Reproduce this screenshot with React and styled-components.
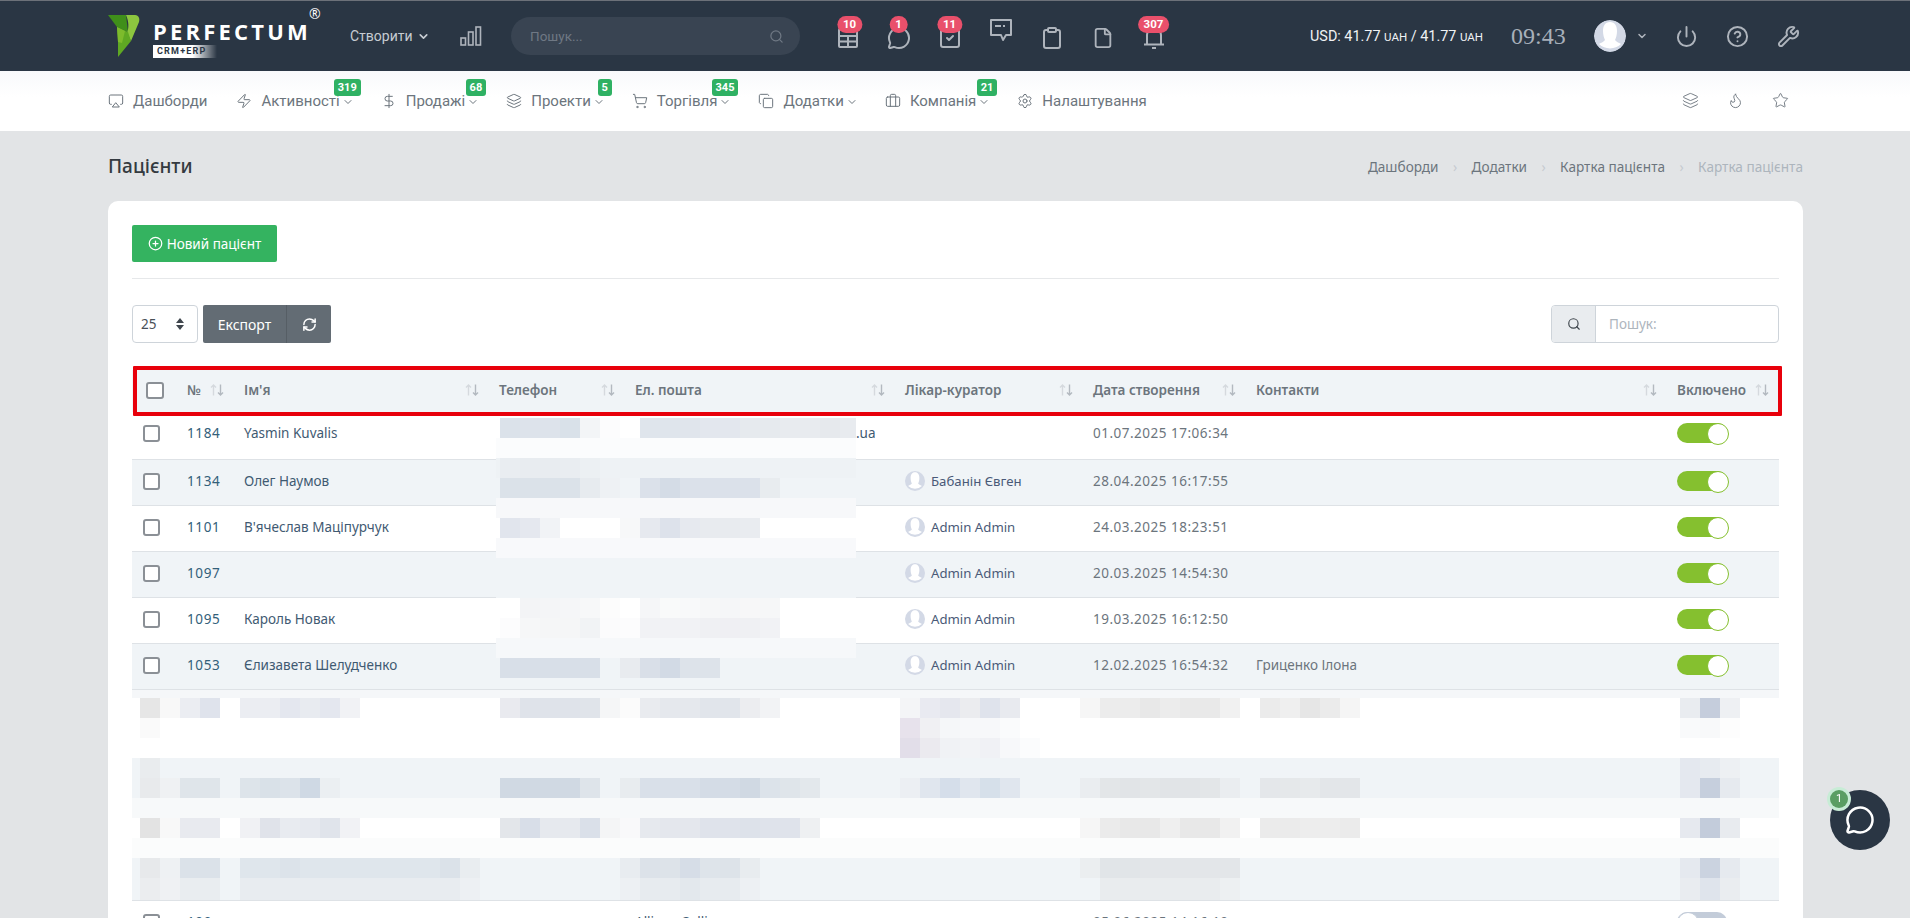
import React from 'react'
import styled, { createGlobalStyle } from 'styled-components'
import {
  Airplay, Zap, DollarSign, Layers, ShoppingCart, Copy, Briefcase, Settings, ChevronDown,
  Search, SquareCheck, Clipboard, File, Power, CircleHelp, Wrench, Flame, Star,
  CirclePlus, RefreshCw, MessageCircle,
} from 'lucide-react'

const GlobalStyle = createGlobalStyle`
  html, body {
    margin: 0;
    height: 100%;
    overflow: hidden;
    background: #e2e4e6;
    font-family: 'Roboto', 'Liberation Sans', sans-serif;
  }
  * { box-sizing: border-box; }
`

const COLS = '55px 57px 255px 136px 270px 188px 163px 421px 102px'

const navItems = [
  { icon: Airplay, label: 'Дашборди', gap: 0 },
  { icon: Zap, label: 'Активності', badge: '319', chevron: true },
  { icon: DollarSign, label: 'Продажі', badge: '68', chevron: true },
  { icon: Layers, label: 'Проекти', badge: '5', chevron: true },
  { icon: ShoppingCart, label: 'Торгівля', badge: '345', chevron: true },
  { icon: Copy, label: 'Додатки', chevron: true },
  { icon: Briefcase, label: 'Компанія', badge: '21', chevron: true },
  { icon: Settings, label: 'Налаштування' },
]

const rows = [
  { id: 1184, name: 'Yasmin Kuvalis', tail: '.ua', date: '01.07.2025 17:06:34' },
  { id: 1134, name: 'Олег Наумов', doctor: 'Бабанін Євген', date: '28.04.2025 16:17:55' },
  { id: 1101, name: "В'ячеслав Маціпурчук", doctor: 'Admin Admin', date: '24.03.2025 18:23:51' },
  { id: 1097, name: '', doctor: 'Admin Admin', date: '20.03.2025 14:54:30' },
  { id: 1095, name: 'Кароль Новак', doctor: 'Admin Admin', date: '19.03.2025 16:12:50' },
  { id: 1053, name: 'Єлизавета Шелудченко', doctor: 'Admin Admin', date: '12.02.2025 16:54:32', contact: 'Гриценко Ілона' },
]

// blurred part over the phone / email columns, 20px blocks from x=500
const emailMask = [
  { bg: '#ffffff', c: ['#dbe2ea', '#dde3eb', '#dde3eb', '#d9e1e9', '#f3f5f7', '#fcfcfd', null, '#dfe5ec', '#dfe5ec', '#e0e5ec', '#e3e7ee', '#e3e7ee', '#e6eaee', '#e6eaee', '#e8ebef', '#e8ebef', '#e6e9ed', '#e8ebef'] },
  { bg: '#fbfcfd', c: [] },
  { bg: '#eef2f5', c: ['#e9edf1', '#e8ecf0', '#e8ecf0', '#e9edf1', '#ecf0f3'] },
  { bg: '#f0f4f7', c: ['#dbe2e9', '#dbe2e9', '#dbe2e9', '#dbe2e9', '#e7ebef', '#eef1f4', null, '#dbe1ea', '#d4dce6', '#dbe1ea', '#dbe1ea', '#dbe1ea', '#dbe1ea', '#e8ecef'] },
  { bg: '#f7f8fa', c: [] },
  { bg: '#ffffff', c: ['#e1e5ed', '#e5e8ef', '#f1f3f6', null, null, null, '#f7f8f9', '#e6e9ef', '#dde2eb', '#e6e9ef', '#e8ebef', '#e8ebef', '#e9ecf0'] },
  { bg: '#f8f9fb', c: [] },
  { bg: '#f0f4f7', c: [] },
  { bg: '#f0f4f7', c: [] },
  { bg: '#ffffff', c: [null, '#f3f4f6', '#f4f5f7', '#f5f6f8', '#f7f8f9', '#fcfcfc', null, '#f5f6f8', '#f9fafa', '#f8f9fa', '#f6f7f8', '#f5f6f8', '#f7f7f8', '#f6f7f8'] },
  { bg: '#ffffff', c: ['#fcfcfd', '#f6f7f8', '#f5f6f7', '#f5f6f7', '#f1f3f5', '#fbfbfc', '#fcfcfd', '#f1f2f5', '#f1f2f5', '#f1f2f5', '#eff0f3', '#efeff3', '#eff0f3', '#f1f2f5'] },
  { bg: '#f6f8fa', c: [] },
  { bg: '#f0f4f7', c: ['#d8dfe8', '#d8dfe8', '#d8dfe8', '#d8dfe8', '#d8dfe8', null, '#e8ebef', '#d9dfe8', '#d2dae5', '#dde3ea', '#dde3ea'] },
]

// blurred rows of the table; segments are [x on the page, colours]
const blurred = [
  { h: 8, bg: '#f5f7f9', seg: [] },
  { h: 20, bg: '#ffffff', seg: [
    [140, ['#e6e6e6', '#f8f8f8', '#ebedf2', '#dfe3ec']],
    [240, ['#ebedf2', '#ebedf2', '#e4e7ef', '#e8ebf0', '#e4e7ef', '#f1f2f5']],
    [500, ['#e9eaef', '#dfe3ea', '#dfe3ea', '#dfe3ea', '#e0e4ea', '#f5f6f7', '#fbfbfb']],
    [640, ['#e9ebef', '#e5e8ed', '#e5e8ed', '#e1e5eb', '#e1e5eb', '#ecedf0', '#f2f3f5']],
    [900, ['#f4f5f7', '#e9eaf1', '#e5e7ee', '#ebecef', '#dfe3ec', '#e8eaef']],
    [1080, ['#f6f6f6', '#ececec', '#ececec', '#e8e8e8', '#ececec', '#e9e9e9', '#e9e9e9', '#f1f1f1']],
    [1260, ['#ebebeb', '#efefef', '#e6e6e6', '#ebebeb', '#f5f5f5']],
    [1680, ['#e9ecf0', '#c5cddc', '#eef0f3']],
  ] },
  { h: 20, bg: '#ffffff', seg: [
    [140, ['#fafafa']],
    [900, ['#e7e2ec', '#f0f0f3', '#f5f7f9', '#f7f8fa', '#f7f8fa', '#fafbfc']],
    [1680, ['#f9fafb', '#f8f9fa', '#fdfdfd']],
  ] },
  { h: 20, bg: '#ffffff', seg: [
    [900, ['#e2dee9', '#ebeaef', '#f0f2f5', '#f2f3f6', '#f0f1f5', '#f7f8fa', '#fbfcfd']],
  ] },
  { h: 20, bg: '#f0f4f7', seg: [
    [140, ['#e9ecee']],
    [1680, ['#e4e8ef', '#e7ebf0', '#edf0f3']],
  ] },
  { h: 20, bg: '#f0f4f7', seg: [
    [140, ['#e8eaec', '#eff1f3', '#dfe5ea', '#dfe5ea']],
    [240, ['#dde4ea', '#d9e1e8', '#dce3ea', '#cfd9e4', '#ebeff2']],
    [500, ['#d0d9e3', '#d0d9e3', '#d0d9e3', '#d0d9e3', '#dee4ea', '#f0f4f7', '#e8ecef']],
    [640, ['#d9e0e9', '#d9e0e9', '#d9e0e9', '#d4dce6', '#d4dce6', '#d0d9e3', '#dce3ea', '#dfe5ea', '#e3e8ec']],
    [900, ['#eceff3', '#e0e6ee', '#d5deea', '#e0e6ee', '#d6e0ea', '#e0e6ee']],
    [1080, ['#eaedf0', '#e3e6e8', '#e1e4e7', '#e3e6e8', '#e1e4e7', '#e1e4e7', '#e3e6e8', '#eaedf0']],
    [1260, ['#e4e7ea', '#e5e8ea', '#e7eaec', '#e3e6e9', '#e3e6e9']],
    [1680, ['#e4e8ef', '#c6cfdd', '#e6eaef']],
  ] },
  { h: 20, bg: '#f7f9fa', seg: [] },
  { h: 20, bg: '#ffffff', seg: [
    [140, ['#e3e3e3', '#f8f8f8', '#e8eaef', '#e8eaef']],
    [240, ['#f0f1f4', '#e0e3ea', '#e8ebf0', '#e6e9ef', '#e0e4eb', '#f1f2f5']],
    [500, ['#e3e6ea', '#d8dee8', '#e6e9ee', '#e6e9ee', '#dae0e9', '#f4f5f6', '#f9f9fa']],
    [640, ['#e6e9ee', '#e4e7ed', '#e4e7ed', '#dfe3eb', '#dfe3eb', '#dde2ea', '#dfe3eb', '#dfe3eb', '#eef0f2']],
    [1080, ['#f6f6f6', '#ebebeb', '#e8e8e8', '#e8e8e8', '#efefef', '#e8e8e8', '#e8e8e8', '#f1f1f1']],
    [1260, ['#ebebeb', '#ebebeb', '#ededed', '#ededed', '#ebebeb']],
    [1680, ['#e6e9ef', '#c3ccdb', '#e8ebef']],
  ] },
  { h: 20, bg: '#fbfcfc', seg: [] },
  { h: 20, bg: '#f0f4f7', seg: [
    [140, ['#e7e9eb', '#eef1f3', '#dbe2e9', '#dbe2e9']],
    [240, ['#dfe6ec', '#dfe6ec', '#dce3ea', '#dfe6ec', '#dfe6ec', '#dfe6ec', '#dfe6ec', '#dfe6ec', '#dfe6ec', '#dfe6ec', '#dbe2e9', '#e9edf0']],
    [620, ['#e8ecf0', '#dce2e9', '#dde3e9', '#d6dde7', '#dee4ea', '#dde3e9', '#e8ecef']],
    [1080, ['#ebeef0', '#e1e5e8', '#e1e5e8', '#e3e6e9', '#e3e6e9', '#e3e6e9', '#e3e6e9', '#e3e6e9']],
    [1680, ['#e5e9ef', '#cbd3e0', '#e6eaef']],
  ] },
  { h: 22, bg: '#f0f4f7', seg: [
    [140, ['#ebedef', '#eff1f3', '#e9edf0', '#e9edf0']],
    [240, ['#e8ecf0', '#e8ecf0', '#e8ecf0', '#e8ecf0', '#e8ecf0', '#e8ecf0', '#e8ecf0', '#e8ecf0', '#e8ecf0', '#e8ecf0', '#e8ecf0', '#edf0f3']],
    [620, ['#edf0f3', '#e7ebef', '#e7ebef', '#e3e8ed', '#e7ebef', '#e7ebef', '#edf0f3']],
    [1100, ['#e9ecee', '#e9ecee', '#e9ecee', '#e9ecee', '#e9ecee', '#e9ecee', '#edf0f2']],
    [1680, ['#e9ecf0', '#dfe4ec', '#eaedf0']],
  ] },
]

const bandCells = (seg) => {
  const cells = []
  seg.forEach(([x, colours]) => {
    const start = (x - 140) / 20
    while (cells.length < start) cells.push(null)
    cells.push(...colours)
  })
  return cells
}

const Logo7 = () => (
  <svg width="32" height="44" viewBox="0 0 32 44">
    <path d="M0 1H18L20 18 9 13Z" fill="#3f8f1a" />
    <path d="M18 1H27C31 1 32 5 31 8L23 27 19 19C21 14 21 8 18 1Z" fill="#8dc63f" />
    <path d="M9 13 20 18 23 27 10 43 10 28Z" fill="#5fa823" />
    <path d="M9 13 17 17 14 29 10 28Z" fill="#7dbb2c" />
  </svg>
)

const BarsIcon = () => (
  <svg width="22" height="20" viewBox="0 0 22 20" fill="none" stroke="#aeb4bc" strokeWidth="1.6">
    <rect x="1" y="12" width="4.5" height="7" />
    <rect x="8.5" y="6" width="4.5" height="13" />
    <rect x="16" y="1" width="4.5" height="18" />
  </svg>
)

const TableIcon = () => (
  <svg width="22" height="22" viewBox="0 0 22 22" fill="none" stroke="currentColor" strokeWidth="2">
    <rect x="2" y="2" width="18" height="18" rx="1" />
    <path d="M2 9h18M2 14.5h18M11 9v11" />
  </svg>
)

const NoteIcon = () => (
  <svg width="24" height="26" viewBox="0 0 24 26" fill="none" stroke="currentColor" strokeWidth="2" strokeLinejoin="round">
    <path d="M2 2h20v15h-5l-3 5-2-5H2z" />
    <path d="M6 8h6M14 8h2" />
  </svg>
)

const BellIcon = () => (
  <svg width="24" height="24" viewBox="0 0 24 24" fill="none" stroke="currentColor" strokeWidth="2">
    <path d="M5 18V9a7 7 0 0 1 14 0v9M2 18.5h20" />
    <path d="M10 22h4" />
  </svg>
)

const SortIcon = () => (
  <svg width="14" height="12" viewBox="0 0 14 12" fill="none" strokeWidth="1.4">
    <path d="M3.5 11.5V1M1 3.5 3.5 1 6 3.5" stroke="#d5d9de" />
    <path d="M10.5 .5V11M8 8.5 10.5 11 13 8.5" stroke="#b3b9c0" />
  </svg>
)

const Person = ({ size }) => (
  <svg width={size} height={size} viewBox="0 0 32 32">
    <circle cx="16" cy="16" r="16" fill="#d3d9e6" />
    <path d="M16 2c5 0 7 4 7 9 0 4-1 7-2 9 1 2 5 3 6 4a16 16 0 0 1-22 0c1-1 5-2 6-4-1-2-2-5-2-9 0-5 2-9 7-9z" fill="#ffffff" />
  </svg>
)

const Mask = ({ bands }) => (
  <MaskLayer>
    {bands.map((band, i) => (
      <MaskBand key={i} $bg={band.bg}>
        {band.c.map((c, j) => <Block key={j} $c={c} />)}
      </MaskBand>
    ))}
  </MaskLayer>
)

const App = () => {
  return (
    <>
      <GlobalStyle />
      <TopBar>
        <Brand>
          <Logo7 />
          <BrandText>
            <BrandName>PERFECTUM</BrandName>
            <BrandTag>CRM+ERP</BrandTag>
          </BrandText>
          <BrandMark>®</BrandMark>
        </Brand>
        <CreateLink>Створити <ChevronDown size={13} strokeWidth={3} /></CreateLink>
        <BarsSlot><BarsIcon /></BarsSlot>
        <SearchPill>
          <span>Пошук...</span>
          <Search size={15} color="#6f7884" />
        </SearchPill>
        <TopIcons>
          <TopIcon><TableIcon /><RedBadge $shift={2}>10</RedBadge></TopIcon>
          <TopIcon><MessageCircle size={24} /><RedBadge>1</RedBadge></TopIcon>
          <TopIcon><SquareCheck size={24} /><RedBadge>11</RedBadge></TopIcon>
          <TopIcon $up><NoteIcon /></TopIcon>
          <TopIcon><Clipboard size={24} /></TopIcon>
          <TopIcon><File size={22} /></TopIcon>
          <TopIcon><BellIcon /><RedBadge>307</RedBadge></TopIcon>
        </TopIcons>
        <Rate>USD: 41.77 <small>UAH</small> / 41.77 <small>UAH</small></Rate>
        <Clock>09:43</Clock>
        <Avatar><Person size={32} /></Avatar>
        <UserChevron><ChevronDown size={12} strokeWidth={3} /></UserChevron>
        <ToolIcon $ml={27}><Power size={23} /></ToolIcon>
        <ToolIcon $ml={28}><CircleHelp size={23} /></ToolIcon>
        <ToolIcon $ml={28}><Wrench size={23} /></ToolIcon>
      </TopBar>

      <NavBar>
        <NavList>
          {navItems.map((item) => (
            <NavItem key={item.label}>
              <item.icon size={16} strokeWidth={1.5} />
              <NavLabel>{item.label}</NavLabel>
              {item.chevron && <NavChevron><ChevronDown size={12} /></NavChevron>}
              {item.badge && <GreenBadge>{item.badge}</GreenBadge>}
            </NavItem>
          ))}
        </NavList>
        <NavTools>
          <Layers size={17} strokeWidth={1.3} />
          <Flame size={17} strokeWidth={1.3} />
          <Star size={17} strokeWidth={1.3} />
        </NavTools>
      </NavBar>

      <Main>
        <TitleRow>
          <PageTitle>Пацієнти</PageTitle>
          <Crumbs>
            <Crumb>Дашборди</Crumb><Sep>›</Sep>
            <Crumb>Додатки</Crumb><Sep>›</Sep>
            <Crumb>Картка пацієнта</Crumb><Sep>›</Sep>
            <Crumb $last>Картка пацієнта</Crumb>
          </Crumbs>
        </TitleRow>

        <Card>
          <NewButton><CirclePlus size={15} /> Новий пацієнт</NewButton>
          <Divider />
          <Toolbar>
            <PageSize>
              25
              <svg width="8" height="12" viewBox="0 0 8 12" fill="#3f464d">
                <path d="M4 0 8 5H0zM4 12 0 7h8z" />
              </svg>
            </PageSize>
            <ButtonGroup>
              <GroupButton>Експорт</GroupButton>
              <GroupButton $icon><RefreshCw size={15} strokeWidth={2.4} /></GroupButton>
            </ButtonGroup>
            <TableSearch>
              <SearchAddon><Search size={14} color="#3f464d" /></SearchAddon>
              <SearchField>Пошук:</SearchField>
            </TableSearch>
          </Toolbar>

          <Table>
            <HeadRow>
              <HeadCell><CheckBox $big /></HeadCell>
              <HeadCell>№<SortIcon /></HeadCell>
              <HeadCell>Ім'я<SortIcon /></HeadCell>
              <HeadCell>Телефон<SortIcon /></HeadCell>
              <HeadCell>Ел. пошта<SortIcon /></HeadCell>
              <HeadCell>Лікар-куратор<SortIcon /></HeadCell>
              <HeadCell>Дата створення<SortIcon /></HeadCell>
              <HeadCell>Контакти<SortIcon /></HeadCell>
              <HeadCell $last>Включено<SortIcon /></HeadCell>
            </HeadRow>

            {rows.map((row, i) => (
              <Row key={row.id} $striped={i % 2 === 1} $first={i === 0}>
                <Cell><CheckBox /></Cell>
                <IdCell>{row.id}</IdCell>
                <LinkCell>{row.name}</LinkCell>
                <Cell />
                <LinkCell>{row.tail && <EmailTail>{row.tail}</EmailTail>}</LinkCell>
                <LinkCell>
                  {row.doctor && <Doctor><Person size={20} />{row.doctor}</Doctor>}
                </LinkCell>
                <DateCell>{row.date}</DateCell>
                <Cell>{row.contact}</Cell>
                <Cell><Toggle $on /></Cell>
              </Row>
            ))}

            <Blurred>
              {blurred.map((band, i) => (
                <Band key={i} $h={band.h} $bg={band.bg}>
                  {bandCells(band.seg).map((c, j) => <Block key={j} $c={c} />)}
                </Band>
              ))}
            </Blurred>

            <Row>
              <Cell><CheckBox /></Cell>
              <IdCell>100</IdCell>
              <Cell />
              <Cell />
              <LinkCell>Allison Collin</LinkCell>
              <Cell />
              <DateCell>05.06.2025 14:16:10</DateCell>
              <Cell />
              <Cell><Toggle /></Cell>
            </Row>

            <Mask bands={emailMask} />
          </Table>
        </Card>
      </Main>

      <ChatButton>
        <MessageCircle size={30} color="#fff" strokeWidth={2} />
        <ChatBadge>1</ChatBadge>
      </ChatButton>
    </>
  )
}

export default App

const TopBar = styled.header`
  height: 71px;
  padding-left: 108px;
  display: flex;
  align-items: center;
  background: #2a3644;
  border-top: 1px solid #6c7179;
  color: #aeb4bc;
`

const Brand = styled.div`
  width: 242px;
  display: flex;
  align-items: center;
  gap: 13px;
`

const BrandText = styled.div`
  display: flex;
  flex-direction: column;
  align-items: flex-start;
  gap: 2px;
  padding-top: 4px;
`

const BrandName = styled.div`
  font-family: 'Open Sans', sans-serif;
  font-size: 22px;
  line-height: 24px;
  font-weight: 700;
  letter-spacing: 3.2px;
  color: #ffffff;
`

const BrandTag = styled.div`
  width: 64px;
  height: 13px;
  padding-left: 4px;
  font-size: 9px;
  line-height: 13px;
  font-weight: 700;
  letter-spacing: 1.2px;
  color: #2a3644;
  background: linear-gradient(90deg, #ffffff 62%, rgba(255, 255, 255, 0) 100%);
`

const BrandMark = styled.span`
  align-self: flex-start;
  margin: -10px 0 0 -15px;
  font-family: 'Open Sans', sans-serif;
  font-size: 14px;
  color: #ffffff;
`

const CreateLink = styled.div`
  width: 110px;
  display: flex;
  align-items: center;
  gap: 4px;
  font-size: 14px;
  color: #c7ccd2;
`

const BarsSlot = styled.div`
  width: 51px;
  display: flex;
`

const SearchPill = styled.div`
  width: 289px;
  height: 38px;
  padding: 0 16px 0 19px;
  display: flex;
  align-items: center;
  justify-content: space-between;
  border-radius: 19px;
  background: #394452;
  font-size: 13.5px;
  color: #6f7884;
`

const TopIcons = styled.div`
  margin-left: 22px;
  display: flex;
`

const TopIcon = styled.div`
  position: relative;
  width: 51px;
  height: 38px;
  display: flex;
  align-items: ${(p) => (p.$up ? 'flex-start' : 'center')};
  justify-content: center;
  padding-top: ${(p) => (p.$up ? '1px' : '3px')};
  color: #aeb4bc;
`

const RedBadge = styled.span`
  position: absolute;
  top: -1px;
  left: 50%;
  transform: translateX(calc(-50% + ${(p) => p.$shift || 0}px));
  min-width: 18px;
  height: 17px;
  padding: 0 6px;
  border-radius: 9px;
  background: #e9506b;
  font-size: 11.5px;
  line-height: 17px;
  font-weight: 700;
  text-align: center;
  color: #ffffff;
`

const Rate = styled.div`
  margin-left: 131px;
  width: 201px;
  font-size: 14.4px;
  font-weight: 400;
  color: #f0f2f4;
  small { font-size: 11.5px; }
`

const Clock = styled.div`
  width: 83px;
  font-family: 'Liberation Serif', serif;
  font-size: 24px;
  color: #a8b0ba;
`

const Avatar = styled.div`
  width: 32px;
  height: 32px;
  border-radius: 50%;
  overflow: hidden;
`

const UserChevron = styled.div`
  margin-left: 10px;
  display: flex;
  color: #aeb4bc;
`

const ToolIcon = styled.div`
  margin-left: ${(p) => p.$ml}px;
  display: flex;
  color: #aeb4bc;
`

const NavBar = styled.nav`
  height: 60px;
  padding: 0 121px 0 108px;
  display: flex;
  align-items: center;
  justify-content: space-between;
  background: linear-gradient(180deg, #f8f9fb 0, #ffffff 26px);
`

const NavList = styled.div`
  display: flex;
  gap: 29px;
`

const NavItem = styled.div`
  position: relative;
  display: flex;
  align-items: center;
  color: #6c757d;
  > svg { margin-right: 9px; }
`

const NavLabel = styled.span`
  font-size: 15px;
  color: #6c757d;
`

const NavChevron = styled.span`
  display: flex;
  margin: 2px -2px 0 2px;
`

const GreenBadge = styled.span`
  position: absolute;
  top: -13px;
  right: -9px;
  height: 17px;
  padding: 0 4px;
  border-radius: 3px;
  background: #2fb163;
  font-size: 11px;
  line-height: 17px;
  font-weight: 700;
  color: #ffffff;
`

const NavTools = styled.div`
  display: flex;
  gap: 28px;
  margin-top: -2px;
  color: #6c757d;
`

const Main = styled.main`
  padding: 0 107px 0 108px;
`

const TitleRow = styled.div`
  height: 70px;
  display: flex;
  align-items: center;
  justify-content: space-between;
`

const PageTitle = styled.h1`
  margin: 0;
  font-family: 'Noto Sans', sans-serif;
  font-size: 19px;
  font-weight: 500;
  color: #343a40;
`

const Crumbs = styled.div`
  display: flex;
  align-items: center;
  font-family: 'Noto Sans', sans-serif;
  font-size: 13.6px;
`

const Crumb = styled.span`
  color: ${(p) => (p.$last ? '#adb5bd' : '#6c757d')};
`

const Sep = styled.span`
  width: 33px;
  text-align: center;
  color: #c6cad0;
`

const Card = styled.section`
  padding: 24px;
  border-radius: 10px;
  background: #ffffff;
  height: 800px;
`

const NewButton = styled.button`
  width: 145px;
  height: 37px;
  padding: 0;
  display: flex;
  align-items: center;
  justify-content: center;
  gap: 4px;
  border: 0;
  border-radius: 2px;
  background: #34b360;
  font-family: 'Noto Sans', sans-serif;
  font-size: 13.5px;
  color: #ffffff;
`

const Divider = styled.hr`
  margin: 16px 0 26px;
  border: 0;
  border-top: 1px solid #e6e8ea;
`

const Toolbar = styled.div`
  height: 38px;
  margin-bottom: 27px;
  display: flex;
  gap: 5px;
`

const PageSize = styled.div`
  width: 66px;
  padding: 0 13px 0 8px;
  display: flex;
  align-items: center;
  justify-content: space-between;
  border: 1px solid #ced4da;
  border-radius: 4px;
  font-family: 'Noto Sans', sans-serif;
  font-size: 13.5px;
  color: #495057;
`

const ButtonGroup = styled.div`
  display: flex;
  border-radius: 2px;
  overflow: hidden;
  background: #636c74;
  color: #ffffff;
`

const GroupButton = styled.div`
  width: ${(p) => (p.$icon ? '45px' : '83px')};
  display: flex;
  align-items: center;
  justify-content: center;
  border-left: ${(p) => (p.$icon ? '1px solid #565e65' : '0')};
  font-family: 'Noto Sans', sans-serif;
  font-size: 14px;
`

const TableSearch = styled.div`
  width: 228px;
  margin-left: auto;
  display: flex;
  border: 1px solid #ced4da;
  border-radius: 4px;
  overflow: hidden;
`

const SearchAddon = styled.div`
  width: 44px;
  display: flex;
  align-items: center;
  justify-content: center;
  border-right: 1px solid #ced4da;
  background: #e9ecef;
`

const SearchField = styled.div`
  flex: 1;
  padding-left: 13px;
  display: flex;
  align-items: center;
  font-family: 'Noto Sans', sans-serif;
  font-size: 13.5px;
  color: #adb5bd;
`

const Table = styled.div`
  position: relative;
  font-family: 'Noto Sans', sans-serif;
  font-size: 13.5px;
  color: #6c757d;
`

// the red frame sits on top of the header row, a little to the right of it
const HeadRow = styled.div`
  position: relative;
  z-index: 2;
  height: 42px;
  padding-bottom: 2px;
  display: grid;
  grid-template-columns: ${COLS};
  background: #f0f4f7;
  &::after {
    content: '';
    position: absolute;
    inset: -4px -3px -4px 1px;
    border: 4px solid #e8000b;
    border-radius: 1px;
    pointer-events: none;
  }
`

const HeadCell = styled.div`
  padding-right: ${(p) => (p.$last ? '10px' : '20px')};
  display: flex;
  align-items: center;
  justify-content: space-between;
  font-weight: 600;
  color: #6c757d;
  &:first-child { padding: 0 0 0 14px; }
`

const Row = styled.div`
  height: ${(p) => (p.$first ? '48px' : '46px')};
  padding-bottom: ${(p) => (p.$first ? '5px' : '3px')};
  display: grid;
  grid-template-columns: ${COLS};
  align-items: center;
  background: ${(p) => (p.$striped ? '#f0f4f7' : '#ffffff')};
  border-bottom: 1px solid #dee2e6;
`

const Cell = styled.div`
  display: flex;
  align-items: center;
  white-space: nowrap;
  &:first-child { padding-left: 11px; }
`

const LinkCell = styled(Cell)`
  color: #3f5a72;
`

const IdCell = styled(Cell)`
  color: #33607a;
  letter-spacing: 0.6px;
`

const DateCell = styled(Cell)`
  letter-spacing: 0.5px;
`

const EmailTail = styled.span`
  margin-left: 221px;
`

const Doctor = styled.span`
  display: flex;
  align-items: center;
  gap: 6px;
  font-size: 13.2px;
  color: #4a5a78;
`

const CheckBox = styled.span`
  width: ${(p) => (p.$big ? '18px' : '17px')};
  height: 17px;
  border: 2px solid #8b9096;
  border-radius: 3px;
  background: #ffffff;
`

const Toggle = styled.span`
  position: relative;
  width: 50px;
  height: 20px;
  border-radius: 10px;
  background: ${(p) => (p.$on ? '#85c02f' : '#c3ccd9')};
  &::after {
    content: '';
    position: absolute;
    top: 0;
    left: ${(p) => (p.$on ? '30px' : '0')};
    width: 20px;
    height: 20px;
    border: 1px solid ${(p) => (p.$on ? '#85c02f' : '#c3ccd9')};
    border-radius: 50%;
    background: #ffffff;
  }
`

const Blurred = styled.div`
  height: 211px;
  border-bottom: 1px solid #dee2e6;
`

const Band = styled.div`
  height: ${(p) => p.$h}px;
  padding-left: 8px;
  display: flex;
  background: ${(p) => p.$bg};
`

const Block = styled.span`
  flex: 0 0 20px;
  height: 100%;
  background: ${(p) => p.$c || 'transparent'};
`

const MaskLayer = styled.div`
  position: absolute;
  z-index: 1;
  top: 48px;
  left: 364px;
  width: 360px;
  overflow: hidden;
`

const MaskBand = styled.div`
  height: 20px;
  padding-left: 4px;
  display: flex;
  background: ${(p) => p.$bg};
`

const ChatButton = styled.div`
  position: fixed;
  left: 1830px;
  top: 790px;
  width: 60px;
  height: 60px;
  display: flex;
  align-items: center;
  justify-content: center;
  border-radius: 50%;
  background: #2a3644;
`

const ChatBadge = styled.span`
  position: absolute;
  top: 0;
  left: 0;
  width: 18px;
  height: 18px;
  border-radius: 50%;
  background: #5a9e63;
  box-shadow: 0 0 0 3px #c8ecd6;
  font-size: 11px;
  line-height: 18px;
  text-align: center;
  color: #ffffff;
`
